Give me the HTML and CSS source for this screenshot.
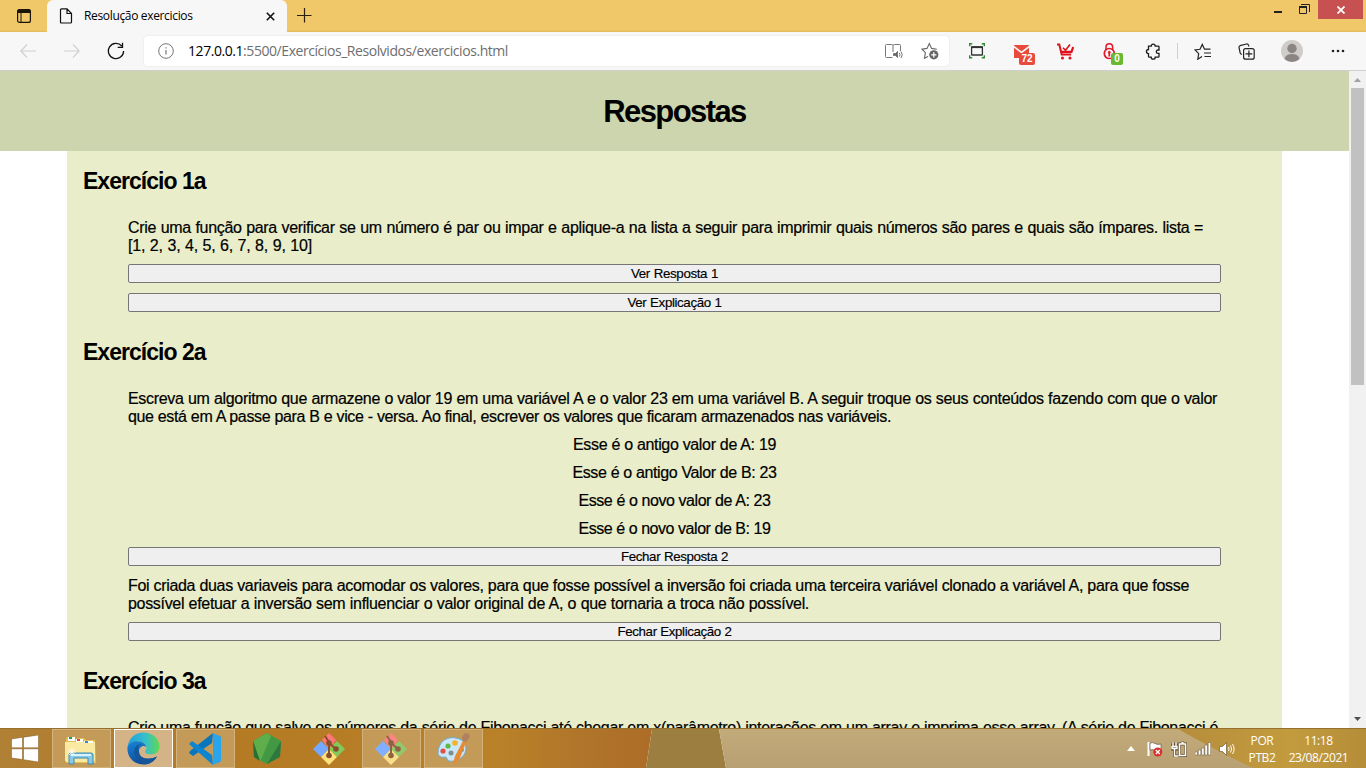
FILE: index.html
```html
<!DOCTYPE html>
<html lang="pt-BR">
<head>
<meta charset="utf-8">
<title>Resolução exercicios</title>
<link rel="stylesheet" href="styles.css">
</head>
<body>
<div class="screen">
  <header class="titlebar">
    <div class="tab-actions"><svg width="16" height="16" viewBox="0 0 16 16"><rect x="1.6" y="1.6" width="12.8" height="12.8" rx="2" fill="none" stroke="#1a1408" stroke-width="1.2"/><path d="M1.2 5V3.2a2 2 0 0 1 2-2h9.6a2 2 0 0 1 2 2V5z" fill="#1a1408"/><path d="M5 5v9" stroke="#1a1408"/></svg></div>
    <div class="tab">
      <svg width="14" height="16" viewBox="0 0 14 16" fill="none" stroke="#111" stroke-width="1.2"><path d="M1.5 1.8q0-1 1-1H8l4.500 4.700V14q0 1-1 1h-9q-1 0-1-1zM8 .8v4.700h4.500"/></svg>
      <span class="tab-title">Resolução exercicios</span>
      <svg class="tab-close" width="9" height="9" viewBox="0 0 9 9" stroke="#111" stroke-width="1.6"><path d="M.8.800l7.400 7.400M8.200.8L.8 8.200"/></svg>
    </div>
    <svg class="new-tab" width="15" height="15" viewBox="0 0 15 15" stroke="#2a1f08" stroke-width="1.200"><path d="M7.500 0v14.500M0 7.500h14.500"/></svg>
    <div class="window-controls">
      <svg width="8" height="3"><path d="M0 1h8" stroke="#222" stroke-width="2"/></svg>
      <svg class="restore" width="11" height="11" viewBox="0 0 11 11" fill="none" stroke="#222"><path d="M2 .500h8.500V8" /><path d="M.5 3v6.500h7V3z"/><path d="M0 3h8" stroke-width="2"/></svg>
      <div class="close"><svg width="8" height="8" viewBox="0 0 8 8" stroke="#fff" stroke-width="1.800"><path d="M.5.500l7 7M7.500.5l-7 7"/></svg></div>
    </div>
  </header>

  <nav class="toolbar">
    <div class="cell first"><svg width="16" height="14" viewBox="0 0 16 14" fill="none" stroke="#cfcfcf" stroke-width="1.100"><path d="M16 7H.8M7 .500L.8 7l6.200 6.500"/></svg></div>
    <div class="cell"><svg width="16" height="14" viewBox="0 0 16 14" fill="none" stroke="#cfcfcf" stroke-width="1.100"><path d="M0 7h15.200M9 .500L15.200 7 9 13.500"/></svg></div>
    <div class="cell"><svg width="18" height="18" viewBox="0 0 18 18" fill="none" stroke="#111" stroke-width="1.300"><path d="M16.600 9A7.600 7.600 0 1 1 14.700 4M15.500.8v4.600H10.700"/></svg></div>
    <div class="address">
      <svg width="16" height="16" viewBox="0 0 16 16" fill="none" stroke="#767676"><circle cx="8" cy="8" r="7.300"/><path d="M8 7v4.500M8 4.200v1.400" stroke-width="1.200"/></svg>
      <span class="url"><b>127.0.0.1</b>:5500/Exercícios_Resolvidos/exercicios.html</span>
      <svg class="reader" width="18" height="17" viewBox="0 0 18 17" fill="none" stroke="#777"><path d="M7.500 14.500H1.500q-1 0-1-1V2.500q0-1 1-1h5q1.500 0 1.500 1 0-1 1.500-1h5q1 0 1 1V8M8 2.500V9"/><path d="M8.500 10.500h2l2-2v6l-2-2h-2z" fill="#666"/><path d="M14.300 9.800q1.400 1.900 0 3.800M16 8.500q2.500 3.200 0 6.500"/></svg>
      <svg class="fav" width="18" height="18" viewBox="0 0 18 18" fill="none" stroke="#666" stroke-width="1.100"><path d="M7 14.500l-3.500 1.700.9-5.500L1 7.200l5-.8L8.300 1.500l2.300 4.900 5.200.8"/><circle cx="12.800" cy="12.800" r="4.600" fill="#666" stroke="none"/><path d="M12.800 10.200v5.200M10.200 12.800h5.200" stroke="#fff" stroke-width="1.300"/></svg>
    </div>
    <div class="cell"><svg width="16" height="16" viewBox="0 0 16 16" fill="none"><path d="M.7 3.200V.700h2.500M12.800.7h2.500v2.500M15.300 12.300v2.500h-2.500M3.200 14.800H.7v-2.500" stroke="#318a2c" stroke-width="1.400"/><rect x="2.600" y="4" width="10.800" height="8" rx=".6" stroke="#333" stroke-width="1.300"/><path d="M2 4.200h12" stroke="#333" stroke-width="1.800"/></svg></div>
    <div class="cell badged"><svg width="17" height="15" viewBox="0 0 17 15"><path d="M1 1h15v13H1z" fill="#e84a3c"/><path d="M0 2l8.500 6.500L17 2" fill="none" stroke="#f7f7f7" stroke-width="1.600"/></svg><span class="badge red">72</span></div>
    <div class="cell"><svg width="17" height="17" viewBox="0 0 17 17" fill="none" stroke="#e0101c"><path d="M0 1.500h2.300L4.700 11.500h9.500" stroke-width="2"/><path d="M4 8.800h10.500L16.200 4" stroke-width="2.200"/><path d="M6 4.800l2.500 2.500L13 1.500" stroke-width="1.600"/><circle cx="5.500" cy="15" r="1.500" fill="#e0101c" stroke="none"/><circle cx="13" cy="15" r="1.500" fill="#e0101c" stroke="none"/></svg></div>
    <div class="cell badged"><svg width="13" height="17" viewBox="0 0 13 17" fill="none" stroke="#e01828"><path d="M3 7V4a3.300 3.300 0 0 1 6.600 0v3" stroke-width="1.500"/><circle cx="6.300" cy="10.500" r="5" stroke-width="1.700"/><circle cx="6.300" cy="9.300" r="1" fill="#e01828"/><path d="M6.300 10v3.500" stroke-width="1.800"/></svg><span class="badge green">0</span></div>
    <div class="cell"><svg width="16" height="17" viewBox="0 0 16 17" fill="none" stroke="#1c1c1c" stroke-width="1.300"><path d="M3.500 3.200h2.700a2 2 0 0 1 4 0h3q.8 0 .8.800v3h-1a1.700 1.700 0 0 0 0 3.400h1v3q0 .8-.8.800h-3a2 2 0 0 1-4 0H4.300q-.8 0-.8-.8v-2.800a2 2 0 0 1 0-4.100z"/></svg></div>
    <i class="divider"></i>
    <div class="cell"><svg width="17" height="17" viewBox="0 0 17 17" fill="none" stroke="#222" stroke-width="1.200"><path d="M8 13.500l-4.200 2.700.9-5.500L1 7l5-.7L8.300 1.500l2.200 4.700h6M10 10h7M10.500 13.500H17"/></svg></div>
    <div class="cell"><svg width="17" height="17" viewBox="0 0 17 17" fill="none" stroke="#222" stroke-width="1.200"><path d="M4 11.500q-1.500-.5-1.800-1.500L1 4.500q-.2-1.400 1-1.800L8.500 1q1.600-.2 2 1.200l.5 1.300"/><rect x="5.600" y="5.600" width="10.600" height="10.600" rx="2"/><path d="M10.900 7.500v6.800M7.500 10.900h6.800"/></svg></div>
    <div class="cell profile"><svg width="22" height="22" viewBox="0 0 22 22"><circle cx="11" cy="11" r="11" fill="#cfccc9"/><circle cx="11" cy="8.500" r="4.700" fill="#8b8683"/><path d="M3.500 19q1-5 7.500-5t7.500 5a11 11 0 0 1-15 0z" fill="#8b8683"/></svg></div>
    <div class="cell"><svg width="14" height="4"><g fill="#222"><circle cx="2" cy="2" r="1.300"/><circle cx="7" cy="2" r="1.300"/><circle cx="12" cy="2" r="1.300"/></g></svg></div>
  </nav>

  <div class="viewport">
    <div class="page">
      <div class="page-head"><h1>Respostas</h1></div>
      <main>
        <section>
          <h2>Exercício 1a</h2>
          <div class="exercise">
            <p><span class="line w1">Crie uma função para verificar se um número é par ou impar e aplique-a na lista a seguir para imprimir quais números são pares e quais são ímpares. lista =</span><span class="line w2">[1, 2, 3, 4, 5, 6, 7, 8, 9, 10]</span></p>
            <button><span class="b1">Ver Resposta 1</span></button>
            <button><span class="b2">Ver Explicação 1</span></button>
          </div>
        </section>
        <section>
          <h2>Exercício 2a</h2>
          <div class="exercise">
            <p><span class="line w3">Escreva um algoritmo que armazene o valor 19 em uma variável A e o valor 23 em uma variável B. A seguir troque os seus conteúdos fazendo com que o valor</span><span class="line w4">que está em A passe para B e vice - versa. Ao final, escrever os valores que ficaram armazenados nas variáveis.</span></p>
            <div class="answers">
              <span class="line w5">Esse é o antigo valor de A: 19</span>
              <span class="line w6">Esse é o antigo Valor de B: 23</span>
              <span class="line w7">Esse é o novo valor de A: 23</span>
              <span class="line w7">Esse é o novo valor de B: 19</span>
            </div>
            <button><span class="b3">Fechar Resposta 2</span></button>
            <p class="after"><span class="line w8">Foi criada duas variaveis para acomodar os valores, para que fosse possível a inversão foi criada uma terceira variável clonado a variável A, para que fosse</span><span class="line w9">possível efetuar a inversão sem influenciar o valor original de A, o que tornaria a troca não possível.</span></p>
            <button><span class="b4">Fechar Explicação 2</span></button>
          </div>
        </section>
        <section>
          <h2>Exercício 3a</h2>
          <div class="exercise"><p><span class="line w10">Crie uma função que salve os números da série de Fibonacci até chegar em x(parâmetro) interações em um array e imprima esse array. (A série de Fibonacci é</span></p></div>
        </section>
      </main>
    </div>
    <aside class="scrollbar">
      <svg width="7" height="4"><path d="M0 4L3.500 0 7 4z" fill="#a0a0a0"/></svg>
      <i class="thumb"></i>
      <svg class="down" width="7" height="4"><path d="M0 0l3.500 4L7 0z" fill="#505050"/></svg>
    </aside>
  </div>

  <footer class="taskbar">
    <svg class="wallpaper" width="1366" height="39" viewBox="0 0 1366 39"><defs>
      <linearGradient id="wa"><stop stop-color="#b08035"/><stop offset=".35" stop-color="#b57a24"/><stop offset=".77" stop-color="#b98128"/><stop offset=".9" stop-color="#b0742a"/><stop offset="1" stop-color="#ad6d28"/></linearGradient>
      <linearGradient id="wb" x2="0" y2="1"><stop stop-color="#c2aa7a"/><stop offset="1" stop-color="#b8a073"/></linearGradient>
      <linearGradient id="wc"><stop stop-color="#b68d3b"/><stop offset=".6" stop-color="#c39b3e"/><stop offset="1" stop-color="#b58d39"/></linearGradient></defs>
      <path d="M0 0h652l-6 39H0z" fill="url(#wa)"/><path d="M652 0h67l7 39h-80z" fill="#9b7e40"/><path d="M719 0h647v39H726z" fill="url(#wb)"/><path d="M1178 0q35 20 75 39h113V0z" fill="url(#wc)"/></svg>
    <div class="start"><svg width="28" height="27" viewBox="0 0 28 27" fill="#fff" stroke="#7d571c" stroke-width=".5"><path d="M.5 4L11.500 2.300v10.500H.5zM12.500 2.200L27.500 0v12.800h-15zM.5 13.800h11v10.700L.5 23zM12.500 13.800h15V27l-15-2.300z"/></svg></div>
    <div class="task open"><svg width="34" height="32" viewBox="0 0 34 32"><path d="M2 6q0-2 2-2h5l2 2h2l1-1h6l2 2h9l1 23H2z" fill="#e3bf55"/><path d="M1 9h30v18q0 2-2 2H3q-2 0-2-2z" fill="#fae9a0"/><path d="M4 4h7v4H4zM12 6h7v3h-7zM20 8h9v2h-9z" fill="#fff"/><path d="M5 4h3v2H5z" fill="#20a535"/><path d="M13 6h3v2h-3z" fill="#d8472d"/><path d="M21 8h3v2h-3z" fill="#368bd0"/><path d="M5 31V22q0-2 2-2h20q2 0 2 2v9h-5v-6H10v6z" fill="#87c9e6" stroke="#3c88b2"/><path d="M7 22h20" stroke="#d5f3ff" stroke-width="2"/><path d="M8 15v8M4 19h8M5 16l6 6M11 16l-6 6" stroke="#fff" stroke-width=".8"/></svg></div>
    <div class="task active"><svg width="33" height="33" viewBox="0 0 33 33"><defs><linearGradient id="eg" x2="1"><stop stop-color="#239fd9"/><stop offset=".55" stop-color="#35bfcf"/><stop offset="1" stop-color="#60d94f"/></linearGradient><linearGradient id="eb" y2="1" x2=".3"><stop stop-color="#1684d5"/><stop offset="1" stop-color="#104d9c"/></linearGradient></defs><path d="M.5 15C2 5.500 8.500.500 16.500.500 26 .500 32.500 7 32.500 14.500c0 5-3.500 8-8.500 8-5.500 0-6.500-2.500-5.500-3.700 1.600-2 1-4.500-.5-6.300C14 8 5 8.500.5 15z" fill="url(#eg)"/><path d="M.5 15C3 9 12 7.500 17 11.500c1.400 1.200 2 2.200 2 3.200-3-2.200-7 .300-7 4.800 0 6.500 8 9.500 18 5C26 31 21 32.500 16.500 32.500 7 32.500-.5 25 .5 15z" fill="url(#eb)"/><path d="M12 19.500c-2-3-1-6 3-7.500-7 0-9.500 7-6.500 12.500 2 4 6 7 10 7.800 5-.5 9-3.300 11.500-7.800-10 4.500-18 1.500-18-5z" fill="#155598"/></svg></div>
    <div class="task open"><svg width="32" height="32" viewBox="0 0 32 32"><path d="M24 0l-1 10L4 23 0 20l1-2z" fill="#0876be"/><path d="M0 11l3-3 20 14 1 10z" fill="#0d86cf"/><path d="M23 0l8 3q1 .500 1 2v22q0 1.500-1 2l-8 3q1-.5 1-2V2q0-1.500-1-2z" fill="#28a5ed"/></svg></div>
    <div class="task"><svg width="28" height="32" viewBox="0 0 28 32"><path d="M14 0l14 8-1 15-13 8L1 24 0 8z" fill="#439943"/><path d="M14 0L0 8l7 21 11-26z" fill="#5eae4c"/><path d="M0 8l7 20-6-4z" fill="#286f35"/><path d="M28 8L14 31l13-7z" fill="#2c783e"/></svg></div>
    <div class="task"><svg width="32" height="32" viewBox="0 0 32 32"><path d="M16 0l7 7-7 9-7-9z" fill="#ff7779"/><path d="M0 16l8-8 8 8-8 8z" fill="#74a9ff"/><path d="M24 8l8 8-8 8-8-8z" fill="#83c95a"/><path d="M16 16l8 8-8 8-8-8z" fill="#ffe17b"/><path d="M12 3l4 6v14M16 10l7 6" stroke="#87502b" stroke-width="2" fill="none"/><g fill="#87502b"><circle cx="16" cy="10" r="2.800"/><circle cx="16" cy="22.500" r="2.800"/><circle cx="23" cy="16" r="2.800"/></g></svg></div>
    <div class="task open"><svg width="32" height="32" viewBox="0 0 32 32"><path d="M16 0l7 7-7 9-7-9z" fill="#fa8582"/><path d="M0 16l8-8 8 8-8 8z" fill="#80afff"/><path d="M24 8l8 8-8 8-8-8z" fill="#92ca6b"/><path d="M16 16l8 8-8 8-8-8z" fill="#f9df89"/><path d="M12 3l4 6v14M16 10l7 6" stroke="#8e6544" stroke-width="2" fill="none"/><g fill="#8e6544"><circle cx="16" cy="10" r="2.800"/><circle cx="16" cy="22.500" r="2.800"/><circle cx="23" cy="16" r="2.800"/></g></svg></div>
    <div class="task open"><svg width="34" height="32" viewBox="0 0 34 32"><path d="M2 20C2 9 11 3 20 5c8 1 12 8 9 15-3 6-9 9-16 8-3-.5-1-4-4-4-4 1-7-1-7-4z" fill="#cbe6f7" stroke="#6ca9cf"/><circle cx="7" cy="18" r="2.600" fill="#e54d42"/><circle cx="12" cy="13" r="2.600" fill="#5ab947"/><circle cx="19" cy="10" r="2.800" fill="#f3b32c"/><circle cx="26" cy="17" r="2" fill="#459fd8"/><circle cx="15" cy="20" r="2.500" fill="#7c8f91"/><path d="M17 31l2-8 8-15 3 1-6 16-5 6z" fill="#e98a30"/><path d="M27 8l-1-4 3-4 4 1 1 3-4 5z" fill="#b08060"/></svg></div>
    <div class="tray">
      <svg class="up" width="8" height="5"><path d="M0 5l4-5 4 5z" fill="#fff"/></svg>
      <svg width="16" height="16" viewBox="0 0 16 16"><path d="M1.500 1v14" stroke="#fff" stroke-width="2"/><path d="M3 2q3-1 5 .500t6 .500v7q-3 1-5.500-.5T3 9z" fill="#fff" stroke="#554528" stroke-width=".6"/><circle cx="10.800" cy="11" r="4.500" fill="#d82f2c"/><path d="M8.800 9l4 4M12.800 9l-4 4" stroke="#fff" stroke-width="1.300"/></svg>
      <svg width="16" height="16" viewBox="0 0 16 16" fill="none"><path d="M2 1v4M5 1v4M1 5h5v3H1zM3.500 8v7h4M8.500 3h6v11.500h-6zM10.500 1.500h2" stroke="#5d4928" stroke-width="2.800"/><path d="M2 1v4M5 1v4M1 5.500h5v2H1zM3.500 8v7h4" stroke="#fff" stroke-width="1.400"/><path d="M8.500 3h6v11.500h-6zM10.500 1.500h2" stroke="#fff" stroke-width="1.600"/></svg>
      <svg width="16" height="14" viewBox="0 0 16 14" fill="#fff" stroke="#635331" stroke-width=".5"><path d="M0 10h2.500v3H0zM3.300 8h2.500v5H3.300zM6.600 6h2.500v7H6.600zM9.900 3h2.500v10H9.900zM13.200.5h2.500V13h-2.500z"/></svg>
      <svg width="16" height="16" viewBox="0 0 16 16" fill="none" stroke="#fff"><path d="M.5 5.500h3L7.500 1.500v13L3.500 10.500h-3z" fill="#fff" stroke="#5d4928" stroke-width=".6"/><path d="M9.500 6q1.300 2 0 4M11.500 4.500q2.300 3.500 0 7M13.500 3q3.200 5 0 10"/></svg>
    </div>
    <div class="language"><span>POR</span><span>PTB2</span></div>
    <div class="clock"><span>11:18</span><span>23/08/2021</span></div>
  </footer>
</div>
</body>
</html>
```
FILE: styles.css
```css
* { box-sizing: border-box; }
body { margin: 0; overflow: hidden; font-family: "Liberation Sans", Arial, sans-serif; color: #000; }
svg { display: block; flex: none; }
.screen { width: 1366px; height: 768px; display: grid; grid-template-rows: 32px 39px 657px 40px; }

.titlebar { background: linear-gradient(#f0c869 30px, #e2b957 32px); display: flex; }
.tab-actions { width: 47px; padding: 8px 0 0 16px; }
.tab { width: 240px; background: #f7f7f7; border-radius: 6px 6px 0 0; display: flex; align-items: center; padding: 0 12px; }
.tab-title { font: 12px/16px "Open Sans", sans-serif; letter-spacing: -0.34px; margin-left: 11px; white-space: nowrap; }
.tab-close { margin-left: auto; }
.new-tab { margin: 8px 0 0 10px; }
.window-controls { margin-left: auto; display: flex; align-items: flex-start; }
.window-controls > svg { margin-top: 11px; }
.window-controls .restore { margin: 4px 8px 0 17px; }
.close { width: 45px; height: 19px; background: #c75050; display: grid; place-items: center; margin-right: 3px; }

.toolbar { background: #f7f7f7; border-bottom: 1px solid #cfcfcf; display: flex; align-items: center; }
.cell { width: 44px; height: 38px; flex: none; display: grid; place-items: center; }
.first { margin-left: 6px; }
.cell:nth-child(5) { margin-left: 6px; }
.address { width: 805px; height: 30px; margin-left: 6px; background: #fff; border-radius: 4px; box-shadow: 0 0 2px #ddd; display: flex; align-items: center; padding: 0 10px 0 14px; flex: none; }
.url { font: 14px/20px "Open Sans", sans-serif; margin-left: 14px; color: #6e6e6e; letter-spacing: -0.44px; white-space: nowrap; }
.url b { color: #000; font-weight: 400; }
.reader { margin-left: auto; }
.fav { margin-left: 18px; }
.badged { position: relative; }
.badge { position: absolute; left: 20px; top: 21px; height: 12px; border-radius: 2px; font-size: 10px; line-height: 12px; font-weight: 700; color: #fff; text-align: center; }
.red { width: 16px; background: #e84a3c; }
.green { left: 24px; width: 12px; background: #6ab82d; }
.divider { width: 1px; height: 16px; background: #cfcfcf; margin: 0 2px; flex: none; }
.profile { width: 48px; }

.viewport { display: flex; overflow: hidden; background: #fff; }
.page { width: 1349px; overflow: hidden; }
.page-head { background: #cdd5ae; height: 80px; display: flex; justify-content: center; align-items: center; padding-top: 2px; }
h1 { margin: 0; font-size: 31px; line-height: 36px; letter-spacing: -1.6px; white-space: nowrap; }
main { width: 1215px; margin: 0 auto; background: #e9edc9; padding-top: 16px; }
section { padding: 0 61px 26px; }
h2 { margin: 0 0 24px -45px; padding-top: 1px; font-size: 23px; line-height: 27px; letter-spacing: -0.97px; }
.exercise { display: flex; flex-direction: column; }
p { margin: 0 0 9px; }
.line { display: block; height: 18px; font-size: 16px; line-height: 18px; white-space: nowrap; text-align: justify; text-align-last: justify; letter-spacing: -0.32px; -webkit-text-stroke: 0.2px #000; }
.w1 { width: 1075px; }
.w2 { width: 184px; letter-spacing: -0.15px; }
.w3 { width: 1089px; }
.w4 { width: 763px; letter-spacing: -0.36px; }
.w5 { width: 203px; letter-spacing: -0.34px; }
.w6 { width: 204px; letter-spacing: -0.4px; }
.w7 { width: 192px; letter-spacing: -0.45px; }
.w8 { width: 1061px; }
.w9 { width: 681px; }
.w10 { width: 1090px; }
.answers { display: flex; flex-direction: column; align-items: center; gap: 10px; margin: 1px 0 9px; }
button { height: 19px; padding: 0; border: 1px solid #767676; border-radius: 2px; background: #efefef; color: #000; font: 13.333px/15px "Liberation Sans", Arial, sans-serif; display: flex; justify-content: center; align-items: center; }
button + button { margin-top: 10px; }
button span { white-space: nowrap; text-align-last: justify; letter-spacing: -0.38px; -webkit-text-stroke: 0.15px #000; }
.b1 { width: 87px; }
.b2 { width: 94px; }
.b3 { width: 107px; }
.b4 { width: 114px; }
.after { margin-top: 11px; }

.scrollbar { width: 17px; background: #f1f1f1; display: flex; flex-direction: column; align-items: center; padding: 7px 0; }
.thumb { width: 13px; height: 297px; background: #c1c1c1; margin-top: 6px; }
.down { margin-top: auto; }

.taskbar { position: relative; display: flex; gap: 3px; align-items: center; border-top: 1px solid #96702f; color: #fff; isolation: isolate; }
.wallpaper { position: absolute; inset: 0; z-index: -1; }
.start { width: 49px; display: grid; place-items: center; }
.task { width: 59px; height: 39px; display: grid; place-items: center; border: 1px solid transparent; flex: none; }
.task svg { margin-right: 1px; }
.open { border-color: #d3b27e; background: #c49a58; }
.active { border: 1px solid #fff; background: #d4b486; }
.tray { margin-left: auto; width: 113px; display: flex; align-items: center; gap: 8px; }
.up { margin-right: 4px; }
.language, .clock { display: flex; flex-direction: column; align-items: center; font: 12px/17px "Open Sans", sans-serif; letter-spacing: -0.4px; }
.language { width: 38px; }
.clock { width: 67px; margin: 0 14px 0 1px; }
```
